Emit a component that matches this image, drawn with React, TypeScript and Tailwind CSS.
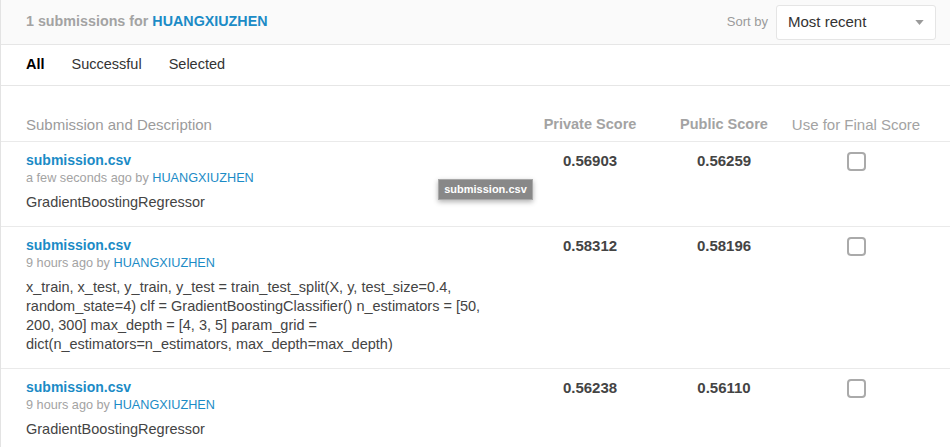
const FONT = "font-['Liberation_Sans','Helvetica_Neue',Arial,sans-serif]";

type Submission = {
  id: string;
  file: string;
  when: string;
  user: string;
  description: string;
  privateScore: string;
  publicScore: string;
};

const submissions: Submission[] = [
  {
    id: "s1",
    file: "submission.csv",
    when: "a few seconds ago",
    user: "HUANGXIUZHEN",
    description: "GradientBoostingRegressor",
    privateScore: "0.56903",
    publicScore: "0.56259",
  },
  {
    id: "s2",
    file: "submission.csv",
    when: "9 hours ago",
    user: "HUANGXIUZHEN",
    description:
      "x_train, x_test, y_train, y_test = train_test_split(X, y, test_size=0.4, random_state=4) clf = GradientBoostingClassifier() n_estimators = [50, 200, 300] max_depth = [4, 3, 5] param_grid = dict(n_estimators=n_estimators, max_depth=max_depth)",
    privateScore: "0.58312",
    publicScore: "0.58196",
  },
  {
    id: "s3",
    file: "submission.csv",
    when: "9 hours ago",
    user: "HUANGXIUZHEN",
    description: "GradientBoostingRegressor",
    privateScore: "0.56238",
    publicScore: "0.56110",
  },
];

function Caret() {
  return (
    <svg viewBox="0 0 10 6" className="h-[5px] w-[9px]" aria-hidden="true">
      <path d="M0 0H10L5 6Z" fill="#9a9a9a" />
    </svg>
  );
}

export default function App() {
  return (
    <div className={`${FONT} h-[447px] w-[950px] overflow-hidden border-l border-[#e3e3e3] bg-white`}>
      {/* header */}
      <div className="flex h-[45px] items-center justify-between border-b border-[#e6e6e6] bg-[#fafafa] pr-[14px] pl-[25px]">
        <div className="text-[14.3px] font-bold text-[#a3a3a3]">
          1 submissions for <span className="text-[#1b8bc6]">HUANGXIUZHEN</span>
        </div>
        <div className="flex items-center gap-2">
          <span className="text-[13px] text-[#9b9b9b]">Sort by</span>
          <div className="flex h-[35px] w-[160px] items-center justify-between rounded-[3px] border border-[#e5e5e5] bg-white pr-[11px] pl-[11px]">
            <span className="text-[15px] text-[#333]">Most recent</span>
            <Caret />
          </div>
        </div>
      </div>

      {/* tabs */}
      <div className="flex h-[41px] items-center gap-[27px] border-b border-[#e6e6e6] pl-[25px] text-[14.5px]">
        <span className="font-bold text-black">All</span>
        <span className="text-[#333]">Successful</span>
        <span className="text-[#333]">Selected</span>
      </div>

      {/* table */}
      <div className="relative">
        <div className="grid grid-cols-[1fr_134px_134px_130px] items-end border-b border-[#eaeaea] pt-[29px] pr-[29px] pb-[7px] pl-[25px] leading-[19px]">
          <span className="text-[15px] text-[#9b9b9b]">Submission and Description</span>
          <span className="text-center text-[14.5px] font-bold text-[#a3a3a3]">Private Score</span>
          <span className="text-center text-[14.5px] font-bold text-[#a3a3a3]">Public Score</span>
          <span className="text-center text-[15px] text-[#a3a3a3]">Use for Final Score</span>
        </div>

        {submissions.map((s) => (
          <div
            key={s.id}
            className="grid grid-cols-[1fr_134px_134px_130px] border-b border-[#eaeaea] pt-[9px] pr-[29px] pb-[14px] pl-[25px]"
          >
            <div className="pr-[30px]">
              <div className="text-[14px] leading-[19px] font-bold text-[#1b8bc6]">{s.file}</div>
              <div className="text-[12.7px] leading-[16px] text-[#a3a3a3]">
                {s.when} by <span className="text-[#1b8bc6]">{s.user}</span>
              </div>
              <p className="mt-[7px] text-[14.5px] leading-[19px] text-[#444]">{s.description}</p>
            </div>
            <div className="text-center text-[15px] leading-[19px] font-bold text-[#444]">{s.privateScore}</div>
            <div className="text-center text-[15px] leading-[19px] font-bold text-[#444]">{s.publicScore}</div>
            <div className="flex justify-center">
              <div className="mt-px h-[19px] w-[19px] rounded-[4px] border-2 border-[#aaa] bg-white" />
            </div>
          </div>
        ))}

        {/* hover tooltip */}
        <div className="absolute top-[93px] left-[437px] flex h-[21px] w-[95px] items-center justify-center border border-[#a8a8a8] bg-[#888] text-[11px] font-bold text-white shadow-[0_2px_5px_rgba(0,0,0,0.3)]">
          submission.csv
        </div>
      </div>
    </div>
  );
}
